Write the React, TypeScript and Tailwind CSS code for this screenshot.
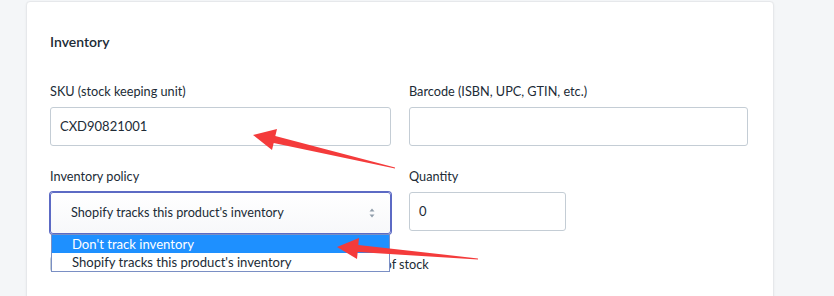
const font = "font-['Lato',_'Noto_Sans',_sans-serif]";

const SelectChevron = () => (
  <svg width="8" height="12" viewBox="0 0 8 12" aria-hidden="true">
    <path d="M4 1.5 L6.5 4.5 H1.5 Z" fill="#919eab" />
    <path d="M4 10.5 L6.5 7.5 H1.5 Z" fill="#919eab" />
  </svg>
);

const Arrows = () => (
  <svg
    className="pointer-events-none absolute left-0 top-0 z-20"
    width="834"
    height="296"
    viewBox="0 0 834 296"
    aria-hidden="true"
  >
    <polygon
      points="253,135 277,129 275.3,136.1 395,167.4 395,168.6 273.7,142.9 272,150"
      fill="#f43b3b"
    />
    <polygon
      points="337,247 359,238 358.3,245 478,258.4 478,259.6 357.7,252 357,259"
      fill="#f43b3b"
    />
  </svg>
);

export default function App() {
  return (
    <div
      className={`relative h-[296px] w-[834px] overflow-hidden bg-[#f4f6f8] text-[12.7px] text-[#212b36] ${font}`}
    >
      <div className="ml-[26px] mt-[1px] h-[320px] w-[748px] rounded-[4px] border border-[#e6e8eb] bg-white px-[23px] pt-[31px] shadow-[0_1px_2px_rgba(63,63,68,0.08)]">
        <h2 className="text-[14px] font-semibold leading-[18px]">Inventory</h2>

        <div className="mt-[32px] grid grid-cols-[341px_339px] gap-x-[18px]">
          <div>
            <label className="block leading-[16px]">SKU (stock keeping unit)</label>
            <div className="mt-[8px] flex h-[39px] items-center rounded-[3px] border border-[#c4cdd5] px-[9px] text-[13px]">
              CXD90821001
            </div>
          </div>
          <div>
            <label className="block leading-[16px]">Barcode (ISBN, UPC, GTIN, etc.)</label>
            <div className="mt-[8px] h-[39px] rounded-[3px] border border-[#c4cdd5]" />
          </div>

          <div className="mt-[22px]">
            <label className="block leading-[16px]">Inventory policy</label>
            <div className="relative mt-[8px]">
              <div className="flex h-[42px] items-center justify-between rounded-[3px] border border-[#5c6ac4] bg-gradient-to-b from-white to-[#f7f8fa] pl-[20px] pr-[14px] shadow-[0_0_0_1px_#5c6ac4]">
                <span>Shopify tracks this product's inventory</span>
                <SelectChevron />
              </div>
              <ul className="absolute left-[1px] right-[1px] top-full z-10 border border-[#7a8fc4] bg-white text-[13.1px] leading-[18px]">
                <li className="bg-[#1e90ff] pl-[20px] text-white">Don't track inventory</li>
                <li className="pl-[20px]">Shopify tracks this product's inventory</li>
              </ul>
            </div>
          </div>
          <div className="mt-[22px]">
            <label className="block leading-[16px]">Quantity</label>
            <div className="mt-[8px] flex h-[39px] w-[157px] items-center rounded-[3px] border border-[#c4cdd5] px-[9px] text-[13px]">
              0
            </div>
          </div>
        </div>

        <div className="mt-[22px] flex items-center gap-[10px]">
          <span className="h-[16px] w-[16px] rounded-[3px] border border-[#c4cdd5]" />
          <span className="leading-[16px]">
            Allow customers to purchase this product when it's out of stock
          </span>
        </div>
      </div>
      <Arrows />
    </div>
  );
}
